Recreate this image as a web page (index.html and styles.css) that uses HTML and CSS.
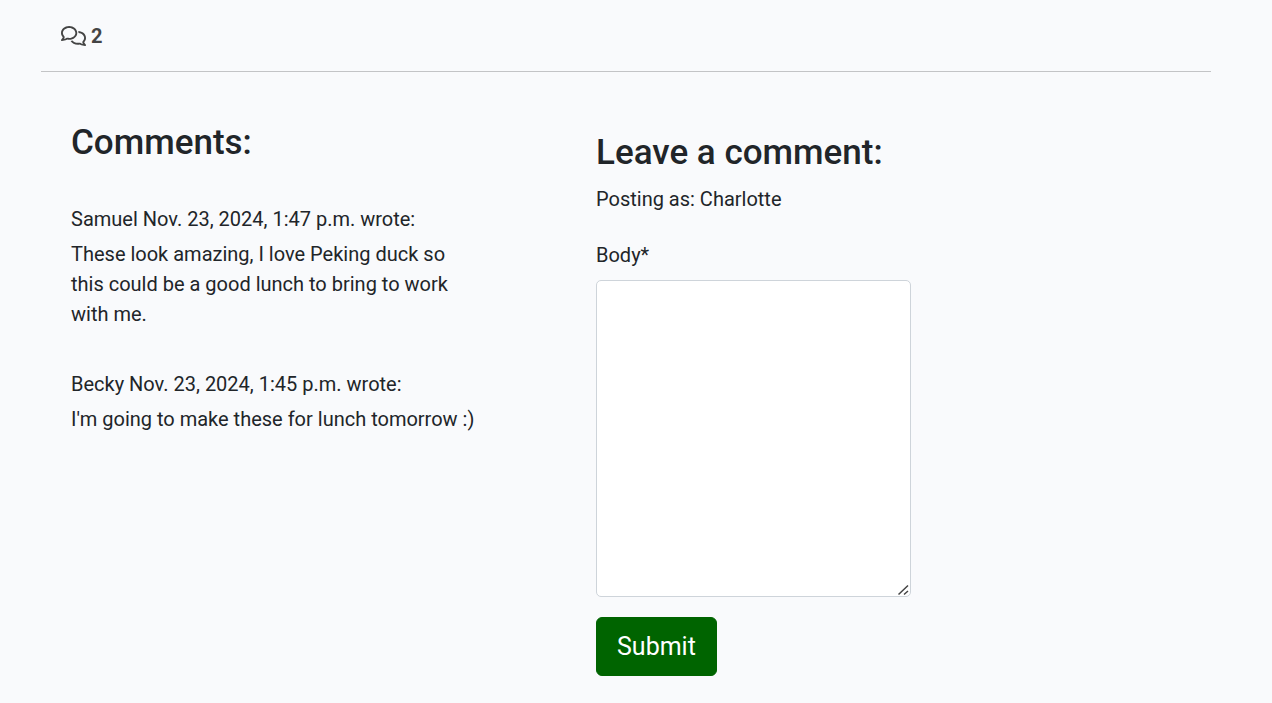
FILE: index.html
```html
<!DOCTYPE html>
<html lang="en">
<head>
  <meta charset="utf-8">
  <meta name="viewport" content="width=device-width, initial-scale=1">
  <title>Comments</title>
  <link rel="stylesheet" href="styles.css">
</head>
<body>
  <main class="page">
    <div class="summary">
      <svg class="summary-icon" viewBox="0 0 640 512" aria-hidden="true"><path fill="currentColor" d="M88.2 309.1c9.8-18.3 6.8-40.8-7.5-55.8C59.4 230.9 48 204 48 176c0-63.5 63.8-128 160-128s160 64.5 160 128s-63.8 128-160 128c-13.1 0-25.8-1.3-37.8-3.6c-10.4-2-21.2-.6-30.7 4.2c-4.1 2.1-8.3 4.1-12.6 6c-16 7.2-32.9 13.5-49.9 18c2.8-4.6 5.4-9.1 7.9-13.6c1.1-1.9 2.2-3.9 3.2-5.9zM208 352c114.9 0 208-78.8 208-176S322.9 0 208 0S0 78.8 0 176c0 41.8 17.2 80.1 45.9 110.3c-.9 1.7-1.9 3.5-2.8 5.1c-10.3 18.4-22.3 36.5-36.6 52.1c-6.6 7-8.3 17.2-4.6 25.9C5.8 378.3 14.4 384 24 384c43 0 86.5-13.3 122.7-29.7c4.8-2.2 9.6-4.5 14.2-6.8c15.1 3 30.9 4.5 47.1 4.5zM432 480c16.2 0 31.9-1.6 47.1-4.5c4.6 2.3 9.4 4.6 14.2 6.8C529.5 498.7 573 512 616 512c9.6 0 18.2-5.7 22-14.5c3.8-8.8 2-19-4.6-25.9c-14.2-15.6-26.2-33.7-36.6-52.1c-.9-1.7-1.9-3.4-2.8-5.1C622.8 384.1 640 345.8 640 304c0-94.4-87.9-171.5-198.2-175.8c4.1 15.2 6.2 31.2 6.2 47.8l0 .6c87.2 6.7 144 67.5 144 127.4c0 28-11.4 54.9-32.7 77.2c-14.3 15-17.3 37.6-7.5 55.8c1.1 2 2.2 4 3.2 5.9c2.5 4.5 5.2 9 7.9 13.6c-17-4.5-33.9-10.7-49.9-18c-4.3-1.9-8.5-3.9-12.6-6c-9.5-4.8-20.3-6.2-30.7-4.2c-12.1 2.4-24.7 3.6-37.8 3.6c-61.7 0-110-26.5-136.8-62.3c-16 5.4-32.8 9.4-50 11.8C279 439.8 350 480 432 480z"/></svg>
      <strong class="summary-count">2</strong>
    </div>
    <hr class="divider">
    <div class="columns">
      <section class="comments">
        <h2 class="heading">Comments:</h2>
        <article class="comment">
          <p class="comment-meta">Samuel Nov. 23, 2024, 1:47 p.m. wrote:</p>
          <p class="comment-text">These look amazing, I love Peking duck so this could be a good lunch to bring to work with me.</p>
        </article>
        <article class="comment">
          <p class="comment-meta">Becky Nov. 23, 2024, 1:45 p.m. wrote:</p>
          <p class="comment-text">I'm going to make these for lunch tomorrow :)</p>
        </article>
      </section>
      <section class="reply">
        <h2 class="heading">Leave a comment:</h2>
        <p class="reply-author">Posting as: Charlotte</p>
        <form class="reply-form">
          <label class="reply-label" for="body">Body*</label>
          <textarea class="reply-body" id="body" name="body" required></textarea>
          <button class="reply-submit" type="submit">Submit</button>
        </form>
      </section>
    </div>
  </main>
</body>
</html>
```

FILE: styles.css
```css
* {
  box-sizing: border-box;
}

body {
  margin: 0;
  background: #f9fafc;
  color: #212529;
  font-family: Roboto, "Liberation Sans", sans-serif;
  font-size: 20px;
  line-height: 30px;
}

.page {
  max-width: 1250px;
  margin: 0 auto;
  padding: 21px 50px 20px 30px;
}

.summary {
  display: flex;
  align-items: center;
  gap: 5px;
  padding: 0 20px;
  color: #444;
}

.summary-icon {
  width: 25px;
  height: 20px;
}

.summary-count {
  font-weight: 700;
}

.divider {
  height: 1px;
  margin: 20px 0 0;
  border: 0;
  background: #c3c4c6;
}

.columns {
  display: flex;
  gap: 120px;
  padding: 50px 30px 0;
}

.comments {
  flex: 0 1 405px;
}

.reply {
  flex: 0 1 315px;
  padding-top: 10px;
}

.heading {
  margin: 0 0 10px;
  font-size: 35px;
  font-weight: 500;
  line-height: 42px;
}

.comment {
  padding-top: 30px;
  margin-bottom: 10px;
}

.comment-meta,
.comment-text,
.reply-author {
  margin: 0;
}

.comment-text {
  margin-top: 5px;
}

.reply-form {
  display: flex;
  flex-direction: column;
  align-items: flex-start;
  margin-top: 26px;
}

.reply-label {
  margin-bottom: 10px;
}

.reply-body {
  width: 100%;
  height: 317px;
  padding: 8px 15px;
  border: 1px solid #ced4da;
  border-radius: 5px;
  background: #fff;
  color: inherit;
  font: inherit;
  resize: vertical;
}

.reply-body::-webkit-resizer {
  background: url("data:image/svg+xml,%3Csvg xmlns='http://www.w3.org/2000/svg' width='15' height='15' viewBox='0 0 15 15'%3E%3Cpath d='M3.5 13.5L13 4.5M9 13.5L13 10' fill='none' stroke='%23444' stroke-width='1.5'/%3E%3C/svg%3E") no-repeat right bottom;
}

.reply-submit {
  margin-top: 20px;
  padding: 10px 20px;
  border: 1px solid #006400;
  border-radius: 6px;
  background: #006400;
  color: #fff;
  font-family: inherit;
  font-size: 25px;
  line-height: 37px;
}
```
